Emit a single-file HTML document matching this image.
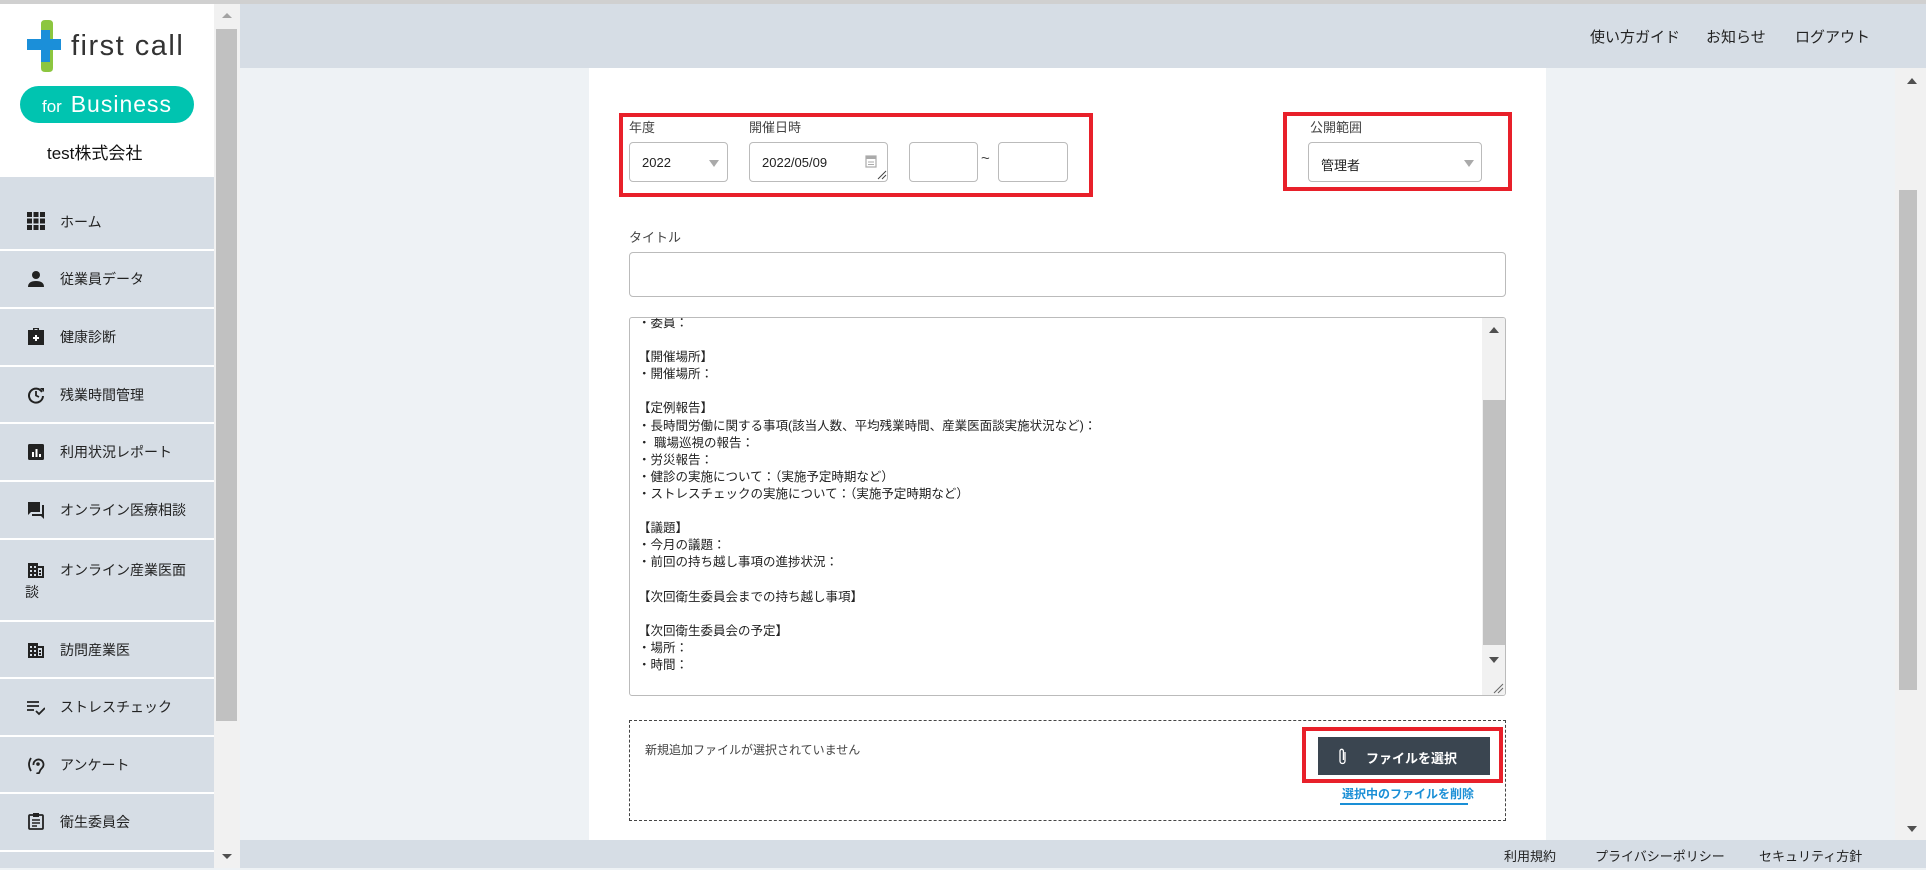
<!DOCTYPE html>
<html><head><meta charset="utf-8"><style>
*{box-sizing:border-box;margin:0;padding:0}
body{width:1926px;height:868px;overflow:hidden;position:relative;background:#eef2f5;font-family:"Liberation Sans","Noto Sans CJK JP",sans-serif;color:#333}
.abs{position:absolute}
#topline{left:0;top:0;width:1926px;height:4px;background:#d0d0d0}
#side{left:0;top:4px;width:214px;height:864px;background:#d6dde5}
#logo{left:0;top:0;width:214px;height:173px;background:#fff}
.mi{position:absolute;left:0;width:214px;border-top:2px solid #fff;font-size:14px;color:#222}
.mi .ic{position:absolute;left:27px;width:18px;height:18px}
.mi span{position:absolute;left:60px}
#sb{left:214px;top:4px;width:26px;height:864px;background:#f1f1f1}
#header{left:240px;top:4px;width:1686px;height:64px;background:#d6dde5}
#header span{position:absolute;top:22px;font-size:15px;color:#222}
#footer{left:240px;top:840px;width:1686px;height:28px;background:#d6dde5}
#footer span{position:absolute;top:6px;font-size:13px;color:#222}
#card{left:589px;top:68px;width:957px;height:772px;background:#fff}
#rsb{left:1895px;top:68px;width:31px;height:772px;background:#f1f1f1}
.lbl{position:absolute;font-size:13px;color:#444}
.box{position:absolute;border:1px solid #bbb;border-radius:4px;background:#fff;font-size:13px;color:#222}
.red{position:absolute;border:4px solid #e8202a}
.tri{position:absolute;width:0;height:0;border-left:5px solid transparent;border-right:5px solid transparent;border-top:7px solid #aaa}
#ta{left:629px;top:317px;width:877px;height:379px;border:1px solid #bbb;border-radius:3px;overflow:hidden;background:#fff}
#ta .txt{position:absolute;left:8px;top:-3px;font-size:12.5px;line-height:17.1px;color:#222;white-space:pre}
</style></head><body>
<div id="topline" class="abs"></div>
<div id="side" class="abs">
 <div id="logo" class="abs">
  <svg class="abs" style="left:27px;top:16px" width="34" height="52" viewBox="0 0 34 52">
   <path d="M14 4 Q14 0 18 0 L22 0 Q26 0 26 4 L26 48 Q26 52 22 52 L18 52 Q14 52 14 48Z" fill="#8cc63f"/>
   <rect x="0" y="19" width="34" height="11" fill="#1b8fd9"/>
   <rect x="14" y="10" width="9" height="32" fill="#1b8fd9"/>
  </svg>
  <div class="abs" style="left:71px;top:26px;font-size:29px;letter-spacing:1.5px;color:#333;font-weight:300">first call</div>
  <div class="abs" style="left:20px;top:82px;width:174px;height:37px;border-radius:19px;background:#00c4b0;color:#fff;text-align:center;line-height:37px"><span style="font-size:17px">for</span>&nbsp; <span style="font-size:23px;letter-spacing:1px">Business</span></div>
  <div class="abs" style="left:47px;top:135px;font-size:17px;color:#111">test株式会社</div>
 </div>
 <div class="mi" style="top:173px;height:72px;border-top:none"><svg class="ic" style="top:35px" viewBox="0 0 18 18"><g fill="#222"><rect x="0" y="0" width="5" height="5"/><rect x="6.5" y="0" width="5" height="5"/><rect x="13" y="0" width="5" height="5"/><rect x="0" y="6.5" width="5" height="5"/><rect x="6.5" y="6.5" width="5" height="5"/><rect x="13" y="6.5" width="5" height="5"/><rect x="0" y="13" width="5" height="5"/><rect x="6.5" y="13" width="5" height="5"/><rect x="13" y="13" width="5" height="5"/></g></svg><span style="top:35px">ホーム</span></div>
 <div class="mi" style="top:245px;height:58px"><svg class="ic" style="top:19px" viewBox="0 0 18 18"><circle cx="9" cy="5" r="4" fill="#222"/><path d="M1 17 Q1 11 9 11 Q17 11 17 17Z" fill="#222"/></svg><span style="top:18px">従業員データ</span></div>
 <div class="mi" style="top:303px;height:58px"><svg class="ic" style="top:18px" viewBox="0 0 18 18"><path d="M6 3 V1 H12 V3 H17 V18 H1 V3Z M7.5 3 H10.5 V2 H7.5Z" fill="#222"/><path d="M8 8 H10 V10 H12 V12 H10 V14 H8 V12 H6 V10 H8Z" fill="#fff"/></svg><span style="top:18px">健康診断</span></div>
 <div class="mi" style="top:361px;height:57px"><svg class="ic" style="top:19px" viewBox="0 0 18 18"><path d="M15 6 A7 7 0 1 0 16 10" fill="none" stroke="#222" stroke-width="2"/><path d="M13 2 L17 2 L17 6Z" fill="#222"/><path d="M9 5 V9.5 L12 11" fill="none" stroke="#222" stroke-width="1.8"/></svg><span style="top:18px">残業時間管理</span></div>
 <div class="mi" style="top:418px;height:58px"><svg class="ic" style="top:19px" viewBox="0 0 18 18"><rect x="1" y="1" width="16" height="16" rx="1.5" fill="#222"/><rect x="5" y="9" width="2" height="5" fill="#fff"/><rect x="8.5" y="6" width="2" height="8" fill="#fff"/><rect x="12" y="11" width="2" height="3" fill="#fff"/></svg><span style="top:18px">利用状況レポート</span></div>
 <div class="mi" style="top:476px;height:58px"><svg class="ic" style="top:19px" viewBox="0 0 18 18"><path d="M1 1 H13 V11 H4 L1 14Z" fill="#222"/><path d="M15 4 H17 V18 L14 15 H5 V13 H15Z" fill="#222"/></svg><span style="top:18px">オンライン医療相談</span></div>
 <div class="mi" style="top:534px;height:82px"><svg class="ic" style="top:21px" viewBox="0 0 18 18"><path d="M1 2 H11 V5 H17 V17 H1Z" fill="#222"/><g fill="#d6dde5"><rect x="3" y="5" width="2" height="2"/><rect x="7" y="5" width="2" height="2"/><rect x="3" y="9" width="2" height="2"/><rect x="7" y="9" width="2" height="2"/><rect x="3" y="13" width="2" height="2"/><rect x="7" y="13" width="2" height="2"/><rect x="11" y="7" width="4" height="8"/></g><rect x="12" y="9" width="2" height="2" fill="#222"/><rect x="12" y="12" width="2" height="2" fill="#222"/></svg><span style="top:20px">オンライン産業医面</span><span style="top:42px;left:25px">談</span></div>
 <div class="mi" style="top:616px;height:57px"><svg class="ic" style="top:19px" viewBox="0 0 18 18"><path d="M1 2 H11 V5 H17 V17 H1Z" fill="#222"/><g fill="#d6dde5"><rect x="3" y="5" width="2" height="2"/><rect x="7" y="5" width="2" height="2"/><rect x="3" y="9" width="2" height="2"/><rect x="7" y="9" width="2" height="2"/><rect x="3" y="13" width="2" height="2"/><rect x="7" y="13" width="2" height="2"/><rect x="11" y="7" width="4" height="8"/></g><rect x="12" y="9" width="2" height="2" fill="#222"/><rect x="12" y="12" width="2" height="2" fill="#222"/></svg><span style="top:18px">訪問産業医</span></div>
 <div class="mi" style="top:673px;height:58px"><svg class="ic" style="top:19px" viewBox="0 0 18 18"><g stroke="#222" stroke-width="1.8" fill="none"><path d="M0 4 H12 M0 8 H12 M0 12 H7 M9 13 L12 16 L18 10"/></g></svg><span style="top:18px">ストレスチェック</span></div>
 <div class="mi" style="top:731px;height:57px"><svg class="ic" style="top:19px" viewBox="0 0 18 18"><g stroke="#222" stroke-width="1.8" fill="none"><path d="M4 2 Q0 8 4 15"/><path d="M6.5 9 A5 5 0 1 1 15 12 Q13 14 12.5 16 Q12 18 9.5 17"/></g><circle cx="11" cy="8" r="1.8" fill="#222"/></svg><span style="top:18px">アンケート</span></div>
 <div class="mi" style="top:788px;height:58px"><svg class="ic" style="top:18px" viewBox="0 0 18 18"><rect x="2" y="3" width="14" height="14" rx="1" fill="none" stroke="#222" stroke-width="1.8"/><rect x="6" y="1" width="6" height="4" fill="#222"/><path d="M5 8 H13 M5 11 H13 M5 14 H10" stroke="#222" stroke-width="1.5"/></svg><span style="top:18px">衛生委員会</span></div>
 <div class="mi" style="top:846px;height:20px"></div>
</div>
<div id="sb" class="abs">
 <div class="abs" style="left:8px;top:9px;border-left:5px solid transparent;border-right:5px solid transparent;border-bottom:5px solid #a3a3a3"></div>
 <div class="abs" style="left:2px;top:25px;width:21px;height:692px;background:#c1c1c1"></div>
 <div class="abs" style="left:8px;top:850px;border-left:5px solid transparent;border-right:5px solid transparent;border-top:5px solid #505050"></div>
</div>
<div id="header" class="abs"><span style="left:1350px">使い方ガイド</span><span style="left:1466px">お知らせ</span><span style="left:1555px">ログアウト</span></div>
<div id="card" class="abs"></div>
<div id="rsb" class="abs">
 <div class="abs" style="left:12px;top:10px;border-left:5px solid transparent;border-right:5px solid transparent;border-bottom:6px solid #505050"></div>
 <div class="abs" style="left:4px;top:122px;width:18px;height:500px;background:#c1c1c1"></div>
 <div class="abs" style="left:12px;top:758px;border-left:5px solid transparent;border-right:5px solid transparent;border-top:6px solid #505050"></div>
</div>
<div id="footer" class="abs"><span style="left:1264px">利用規約</span><span style="left:1355px">プライバシーポリシー</span><span style="left:1519px">セキュリティ方針</span></div>

<div class="red" style="left:619px;top:113px;width:474px;height:84px"></div>
<div class="red" style="left:1283px;top:112px;width:229px;height:79px"></div>
<div class="lbl" style="left:629px;top:117px">年度</div>
<div class="lbl" style="left:749px;top:117px">開催日時</div>
<div class="lbl" style="left:1310px;top:117px">公開範囲</div>
<div class="box" style="left:629px;top:142px;width:99px;height:40px"><span class="abs" style="left:12px;top:12px">2022</span><div class="tri" style="left:79px;top:17px"></div></div>
<div class="box" style="left:749px;top:142px;width:139px;height:40px"><span class="abs" style="left:12px;top:12px">2022/05/09</span>
 <svg class="abs" style="left:115px;top:11px" width="12" height="14" viewBox="0 0 12 14"><rect x="1" y="2" width="10" height="11" fill="none" stroke="#aaa" stroke-width="1.2"/><rect x="1" y="2" width="10" height="3" fill="#aaa"/><path d="M3 8 H9 M3 10.5 H9" stroke="#aaa"/></svg>
 <svg class="abs" style="left:127px;top:27px" width="10" height="10"><path d="M1 9 L9 1 M5 9 L9 5" stroke="#444"/></svg></div>
<div class="box" style="left:909px;top:142px;width:69px;height:40px"></div>
<div class="abs" style="left:981px;top:150px;font-size:15px;color:#444">~</div>
<div class="box" style="left:998px;top:142px;width:70px;height:40px"></div>
<div class="box" style="left:1308px;top:142px;width:174px;height:40px"><span class="abs" style="left:12px;top:12px">管理者</span><div class="tri" style="left:155px;top:17px"></div></div>
<div class="lbl" style="left:629px;top:227px">タイトル</div>
<div class="box" style="left:629px;top:252px;width:877px;height:45px"></div>
<div id="ta" class="abs">
<div class="txt">・委員：

【開催場所】
・開催場所：

【定例報告】
・長時間労働に関する事項(該当人数、平均残業時間、産業医面談実施状況など)：
・ 職場巡視の報告：
・労災報告：
・健診の実施について：（実施予定時期など）
・ストレスチェックの実施について：（実施予定時期など）

【議題】
・今月の議題：
・前回の持ち越し事項の進捗状況：

【次回衛生委員会までの持ち越し事項】

【次回衛生委員会の予定】
・場所：
・時間：</div>
 <div class="abs" style="left:852px;top:0;width:24px;height:377px;background:#f1f1f1"></div>
 <div class="abs" style="left:859px;top:9px;border-left:5px solid transparent;border-right:5px solid transparent;border-bottom:6px solid #505050"></div>
 <div class="abs" style="left:853px;top:82px;width:22px;height:245px;background:#c1c1c1"></div>
 <div class="abs" style="left:859px;top:339px;border-left:5px solid transparent;border-right:5px solid transparent;border-top:6px solid #505050"></div>
 <svg class="abs" style="left:862px;top:364px" width="12" height="12"><path d="M2 11 L11 2 M6 11 L11 6" stroke="#666"/></svg>
</div>
<div class="abs" style="left:629px;top:720px;width:877px;height:101px;border:1px dashed #444"></div>
<div class="abs" style="left:645px;top:741px;font-size:12px;color:#444">新規追加ファイルが選択されていません</div>
<div class="red" style="left:1302px;top:727px;width:201px;height:56px"></div>
<div class="abs" style="left:1318px;top:737px;width:172px;height:38px;background:#3a4550;color:#fff;font-size:13px;font-weight:bold">
 <svg class="abs" style="left:20px;top:11px" width="10" height="17" viewBox="0 0 10 17"><path d="M7 4 V13 A2.5 2.5 0 0 1 2 13 V3 A1.7 1.7 0 0 1 5.4 3 V12" fill="none" stroke="#fff" stroke-width="1.3"/></svg>
 <span class="abs" style="left:48px;top:11px">ファイルを選択</span></div>
<div class="abs" style="left:1342px;top:785px;font-size:12px;color:#1a8fd6;font-weight:bold">選択中のファイルを削除</div>
<div class="abs" style="left:1340px;top:803px;width:128px;height:2px;background:#1a8fd6"></div>
</body></html>
